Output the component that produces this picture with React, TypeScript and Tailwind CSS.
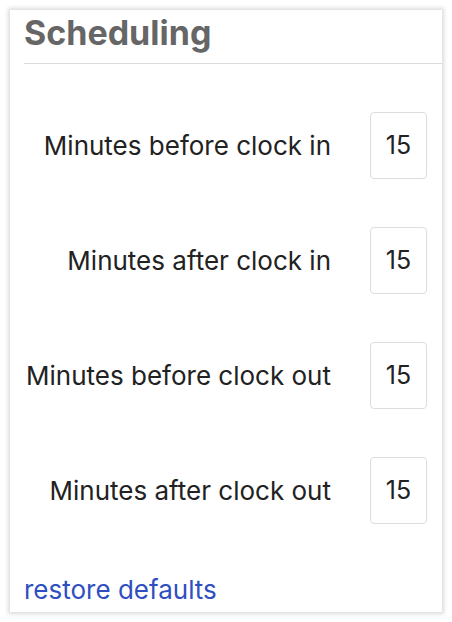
const ROWS = [
  { label: "Minutes before clock in", value: "15" },
  { label: "Minutes after clock in", value: "15" },
  { label: "Minutes before clock out", value: "15" },
  { label: "Minutes after clock out", value: "15" },
];

export default function App() {
  return (
    <div className="w-[452px] h-[622px] bg-white p-[10px] font-['Inter',sans-serif]">
      <div className="h-full flex flex-col bg-white shadow-[0_0_4px_2px_rgba(0,0,0,0.14)] pl-[14px]">
        <h2 className="text-[34px] leading-[40px] font-bold text-[#666] pt-[3px] pb-[10px]">
          Scheduling
        </h2>
        <div className="border-b border-[#dcdcdc]" />

        <div className="flex flex-col gap-[48px] pt-[48px] pr-[15px]">
          {ROWS.map((row) => (
            <div key={row.label} className="flex items-center justify-end">
              <label className="text-[26px] text-[#222] mr-[39px]">{row.label}</label>
              <div className="w-[57px] h-[67px] border border-[#ddd] rounded-[4px] flex items-center justify-center text-[25px] text-[#222]">
                {row.value}
              </div>
            </div>
          ))}
        </div>

        <a href="#" className="mt-auto mb-[6px] text-[26px] leading-[32px] text-[#2f4fc0]">
          restore defaults
        </a>
      </div>
    </div>
  );
}
